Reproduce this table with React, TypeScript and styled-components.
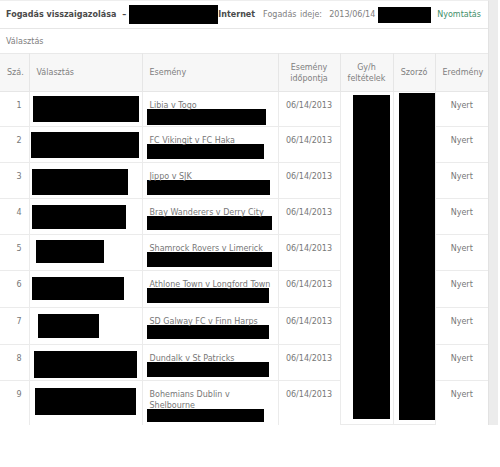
import React from "react";
import styled, { createGlobalStyle } from "styled-components";

const Global = createGlobalStyle`
  html, body { margin: 0; padding: 0; background: #fff; }
  body { font-family: "DejaVu Sans", Verdana, sans-serif; }
`;

const Page = styled.div`
  display: flex;
  width: 498px;
  align-items: stretch;
`;

const Panel = styled.div`
  width: 488px;
  border-top: 1px solid #eeeeee;
  border-right: 1px solid #e2e2e2;
  display: flex;
  flex-direction: column;
`;

const Strip = styled.div`
  width: 9px;
  background: #ececec;
`;

const TopBar = styled.div`
  height: 27px;
  display: flex;
  align-items: center;
  padding-left: 6px;
  border-bottom: 1px solid #e6e6e6;
  font-size: 8px;
  color: #777;
  white-space: nowrap;
`;

const Title = styled.span`
  font-weight: bold;
  color: #4a4a4a;
`;

const Dash = styled.span`
  font-weight: bold;
  color: #4a4a4a;
  margin: 0 3px 0 6px;
`;

const Block = styled.span<{ w: number; h: number; ml?: number }>`
  display: inline-block;
  background: #000;
  width: ${(p) => p.w}px;
  height: ${(p) => p.h}px;
  margin-left: ${(p) => p.ml ?? 0}px;
`;

const Meta = styled.span`
  margin-left: 8px;
  color: #808080;
  word-spacing: 1px;
`;

const PrintLink = styled.span`
  margin-left: 6px;
  color: #3f8f6a;
`;

const Section = styled.div`
  height: 24px;
  display: flex;
  align-items: center;
  padding-left: 6px;
  font-size: 8px;
  color: #808080;
`;

const Table = styled.table`
  width: 488px;
  table-layout: fixed;
  border-collapse: collapse;
  font-size: 8px;
  color: #777;
`;

const Th = styled.th<{ align?: string }>`
  height: 37px;
  padding: 0 7px;
  background: #f7f7f7;
  border: 1px solid #e6e6e6;
  border-top-color: #e9e9e9;
  font-weight: normal;
  text-align: ${(p) => p.align || "center"};
  line-height: 11px;
  color: #808080;
  &:first-child { border-left: none; }
  &:last-child { border-right: none; }
`;

const Td = styled.td<{ align?: string; pad?: string }>`
  border: 1px solid #ebebeb;
  padding: ${(p) => p.pad || "8px 7px 0 7px"};
  vertical-align: top;
  text-align: ${(p) => p.align || "left"};
  line-height: 11px;
  &:first-child { border-left: none; }
  &:last-child { border-right: none; }
`;

const Row = styled.tr<{ h: number }>`
  height: ${(p) => p.h}px;
  &:last-child td { border-bottom: none; }
`;

const Redact = styled.div<{ w: number; h: number; l: number; t: number }>`
  background: #000;
  width: ${(p) => p.w}px;
  height: ${(p) => p.h}px;
  margin-left: ${(p) => p.l}px;
  margin-top: ${(p) => p.t}px;
`;

const EventText = styled.div`
  padding-left: 0;
`;

type R = {
  n: number;
  h: number;
  ev: React.ReactNode;
  sel: [number, number, number, number];
  evBox: [number, number];
};

const rows: R[] = [
  { n: 1, h: 35, ev: "Libia v Togo", sel: [3, 4, 106, 26], evBox: [119, 16] },
  { n: 2, h: 36, ev: "FC Vikingit v FC Haka", sel: [1, 5, 108, 26], evBox: [117, 15] },
  { n: 3, h: 36, ev: "Jippo v SJK", sel: [2, 6, 96, 26], evBox: [123, 15] },
  { n: 4, h: 36, ev: "Bray Wanderers v Derry City", sel: [2, 6, 94, 24], evBox: [125, 14] },
  { n: 5, h: 36, ev: "Shamrock Rovers v Limerick", sel: [6, 5, 68, 23], evBox: [125, 15] },
  { n: 6, h: 37, ev: "Athlone Town v Longford Town", sel: [2, 6, 92, 23], evBox: [122, 15] },
  { n: 7, h: 37, ev: "SD Galway FC v Finn Harps", sel: [8, 6, 61, 24], evBox: [122, 14] },
  { n: 8, h: 36, ev: "Dundalk v St Patricks", sel: [4, 6, 103, 27], evBox: [122, 15] },
  {
    n: 9,
    h: 44,
    ev: (
      <>
        Bohemians Dublin v<br />
        Shelbourne
      </>
    ),
    sel: [5, 7, 101, 27],
    evBox: [117, 13],
  },
];

export default function App() {
  return (
    <>
      <Global />
      <Page>
        <Panel>
          <TopBar>
            <Title>Fogadás visszaigazolása</Title>
            <Dash>–</Dash>
            <Block w={89} h={19} />
            <Title>Internet</Title>
            <Meta>Fogadás ideje:&nbsp; 2013/06/14</Meta>
            <Block w={53} h={16} ml={3} />
            <PrintLink>Nyomtatás</PrintLink>
          </TopBar>
          <Section>Választás</Section>
          <Table>
            <colgroup>
              <col style={{ width: 29 }} />
              <col style={{ width: 113 }} />
              <col style={{ width: 136 }} />
              <col style={{ width: 62 }} />
              <col style={{ width: 53 }} />
              <col style={{ width: 42 }} />
              <col style={{ width: 53 }} />
            </colgroup>
            <thead>
              <tr>
                <Th align="right">Szá.</Th>
                <Th align="left">Választás</Th>
                <Th align="left">Esemény</Th>
                <Th>
                  Esemény
                  <br />
                  időpontja
                </Th>
                <Th>
                  Gy/h
                  <br />
                  feltételek
                </Th>
                <Th>Szorzó</Th>
                <Th>Eredmény</Th>
              </tr>
            </thead>
            <tbody>
              {rows.map((r, i) => (
                <Row key={r.n} h={r.h}>
                  <Td align="right">{r.n}</Td>
                  <Td pad="0">
                    <Redact l={r.sel[0]} t={r.sel[1]} w={r.sel[2]} h={r.sel[3]} />
                  </Td>
                  <Td>
                    <EventText>{r.ev}</EventText>
                    <Redact l={-3} t={-2} w={r.evBox[0]} h={r.evBox[1]} />
                  </Td>
                  <Td align="center">06/14/2013</Td>
                  {i === 0 && (
                    <>
                      <Td pad="0" rowSpan={9}>
                        <Redact l={12} t={3} w={37} h={324} />
                      </Td>
                      <Td pad="0" rowSpan={9}>
                        <Redact l={5} t={1} w={36} h={327} />
                      </Td>
                    </>
                  )}
                  <Td align="center">Nyert</Td>
                </Row>
              ))}
            </tbody>
          </Table>
        </Panel>
        <Strip />
      </Page>
    </>
  );
}
